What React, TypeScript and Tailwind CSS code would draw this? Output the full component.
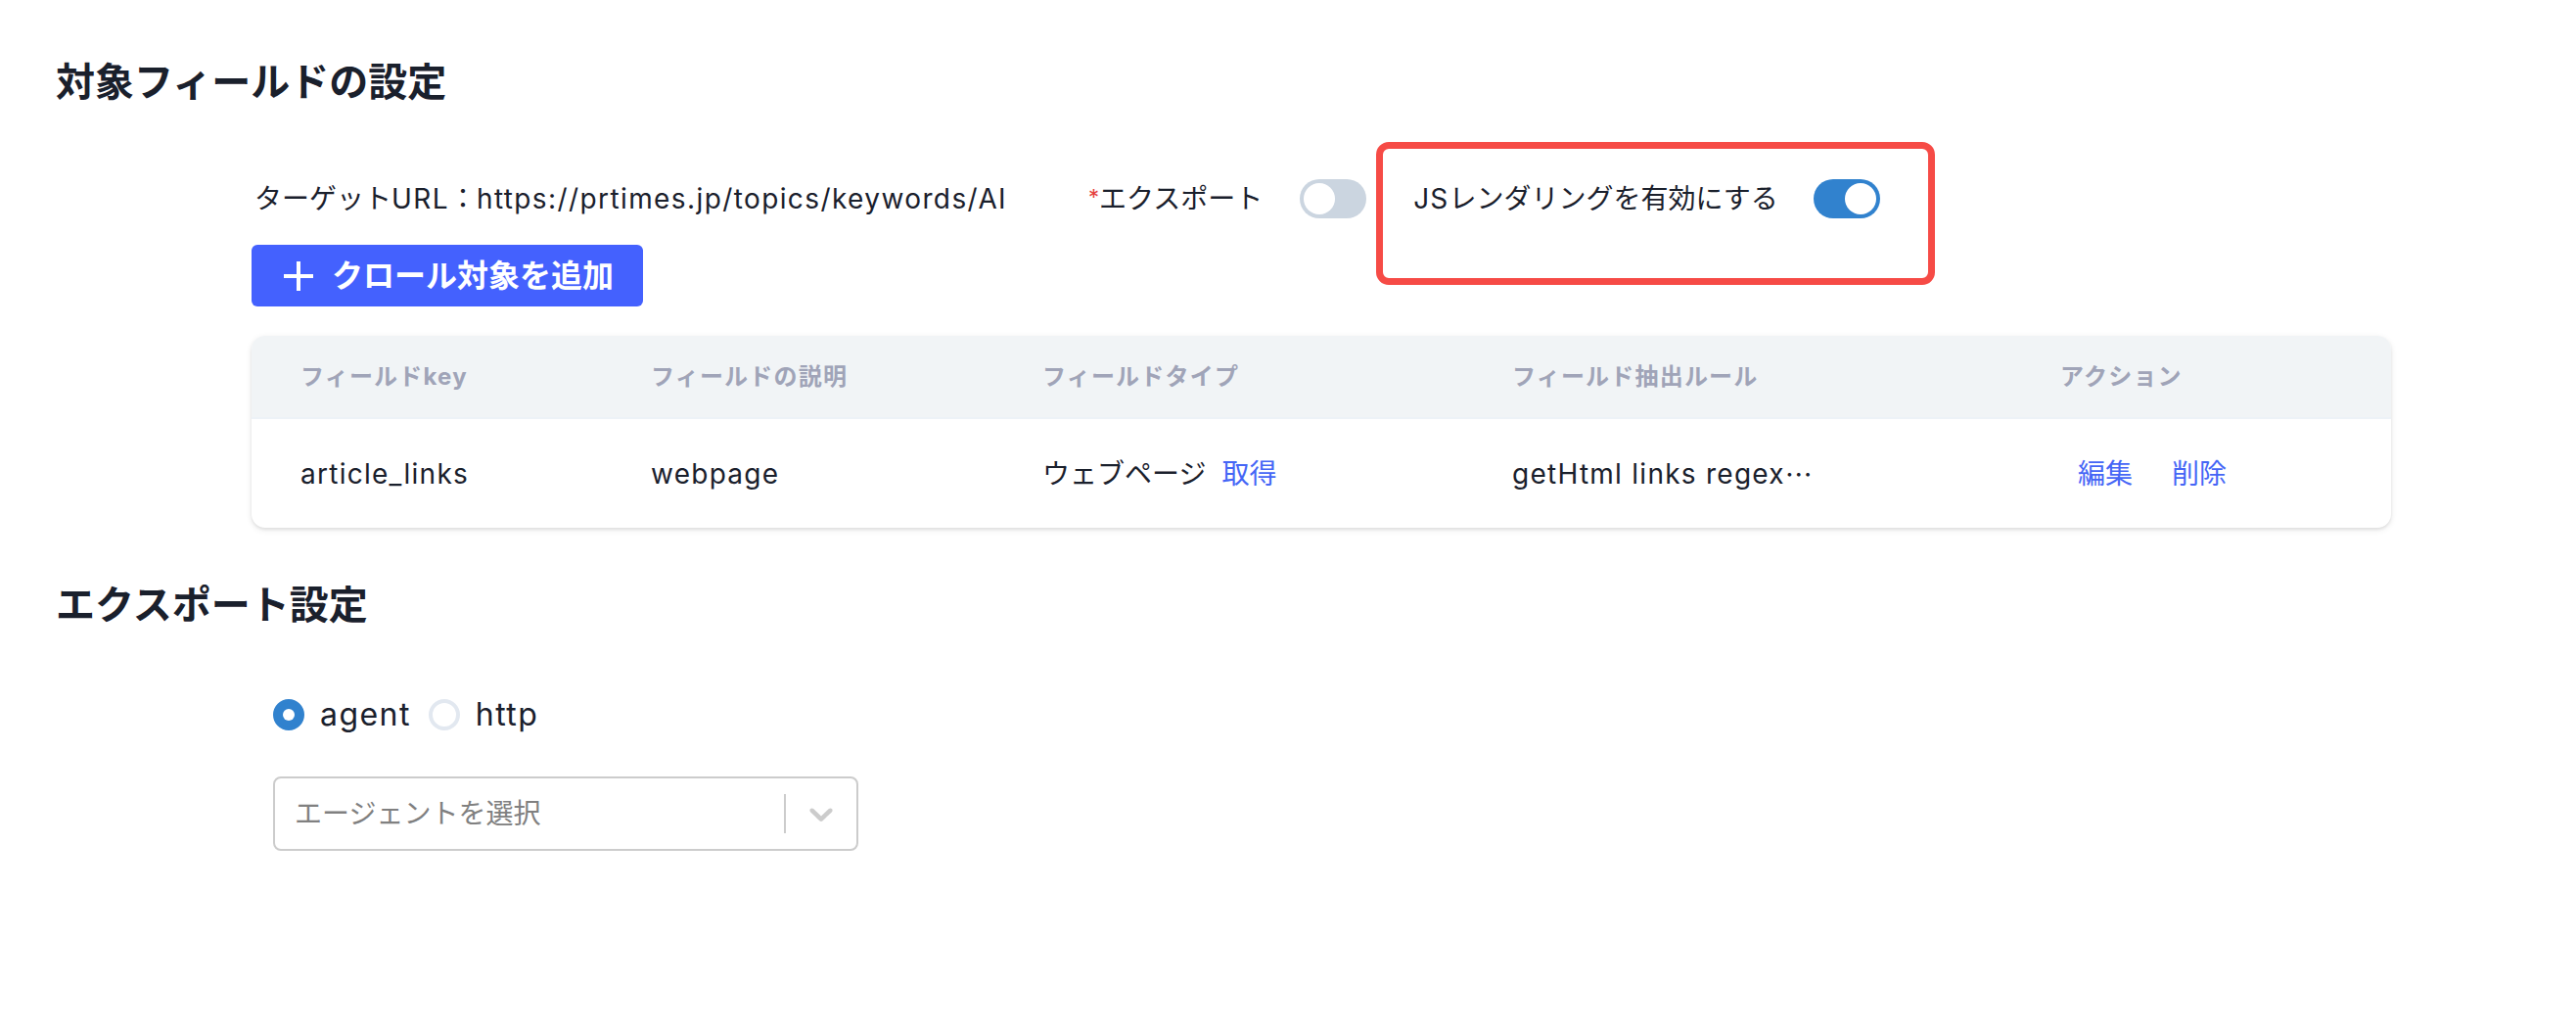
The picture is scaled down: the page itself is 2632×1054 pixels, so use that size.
import React from 'react';

const COLS = 'grid grid-cols-[358px_400px_480px_560px_1fr] items-center pl-[50px]';

const Toggle: React.FC<{ on?: boolean; className?: string }> = ({ on, className = '' }) => (
  <div
    className={`flex h-[40px] w-[68px] shrink-0 items-center rounded-full p-[4px] ${
      on ? 'justify-end bg-[#3182ce]' : 'justify-start bg-[#cbd5e0]'
    } ${className}`}
  >
    <div className="h-[32px] w-[32px] rounded-full bg-white" />
  </div>
);

const Radio: React.FC<{ checked?: boolean; label: string; className?: string }> = ({ checked, label, className = '' }) => (
  <label className={`flex items-center ${className}`}>
    {checked ? (
      <span className="flex h-[32px] w-[32px] items-center justify-center rounded-full border-[4px] border-[#3182ce] bg-[#3182ce]">
        <span className="h-[12px] w-[12px] rounded-full bg-white" />
      </span>
    ) : (
      <span className="h-[32px] w-[32px] rounded-full border-[4px] border-[#e2e8f0] bg-white" />
    )}
    <span className="ml-[16px] tracking-[0.045em]">{label}</span>
  </label>
);

const App: React.FC = () => {
  return (
    <div className="min-h-screen w-full bg-white pl-[57px] pt-[56px] font-['Inter','Noto_Sans_CJK_JP',sans-serif] text-[#1a202c]">
      {/* Target fields */}
      <h2 className="text-[40px] font-bold leading-[56px]">対象フィールドの設定</h2>

      <div className="ml-[200px] w-[2186px]">
        <div className="mt-[71px] flex h-[40px] items-center text-[28px]">
          <span className="w-[774px] shrink-0 whitespace-nowrap pl-[3px]">
            ターゲット<span className="tracking-[0.05em]">URL</span>：
            <span className="tracking-[0.05em]">https://prtimes.jp/topics/keywords/AI</span>
          </span>

          <div className="ml-[81px] flex items-center">
            <span>
              <span className="relative top-[-4px] text-[22px] text-[#e53e3e]">*</span>エクスポート
            </span>
            <Toggle className="ml-[38px]" />
          </div>

          <div className="relative ml-[48px] flex items-center">
            <span>
              <span className="tracking-[0.04em]">JS</span>レンダリングを有効にする
            </span>
            <Toggle on className="ml-[36px]" />
            {/* highlight annotation */}
            <div className="pointer-events-none absolute left-[-38px] top-[-37px] h-[146px] w-[571px] rounded-[13px] border-[7px] border-[#f64b46]" />
          </div>
        </div>

        <button className="mt-[27px] flex h-[63px] items-center gap-[18px] rounded-[6px] bg-[#4461fe] pl-[32px] pr-[30px] text-[32px] font-semibold text-white">
          <svg width="32" height="32" viewBox="0 0 32 32" fill="none" stroke="currentColor" strokeWidth="4">
            <path d="M16 1v30M1 16h30" />
          </svg>
          クロール対象を追加
        </button>

        {/* Fields table */}
        <div className="mt-[30px] overflow-hidden rounded-[14px] bg-white shadow-[0_2px_6px_rgba(0,0,0,0.1),0_2px_3px_rgba(0,0,0,0.06)]">
          <div className={`${COLS} h-[83px] bg-[#f1f4f6] text-[24px] font-bold tracking-[0.05em] text-[#a0a4b8]`}>
            <span>フィールドkey</span>
            <span>フィールドの説明</span>
            <span>フィールドタイプ</span>
            <span>フィールド抽出ルール</span>
            <span>アクション</span>
          </div>
          <div className={`${COLS} h-[113px] border-t-2 border-[#edf2f7] text-[28px]`}>
            <span className="tracking-[0.045em]">article_links</span>
            <span className="tracking-[0.045em]">webpage</span>
            <span className="flex items-center gap-[16px]">
              ウェブページ
              <span className="text-[#4566f6]">取得</span>
            </span>
            <span className="flex items-center">
              <span className="tracking-[0.045em]">getHtml links regex</span>
              <span className="font-['Noto_Sans_CJK_JP',sans-serif]">⋯</span>
            </span>
            <span className="flex items-center gap-[40px] pl-[18px] text-[#4566f6]">
              <span>編集</span>
              <span>削除</span>
            </span>
          </div>
        </div>
      </div>

      {/* Export settings */}
      <h2 className="mt-[51px] text-[40px] font-bold leading-[56px]">エクスポート設定</h2>

      <div className="ml-[222px]">
        <div className="mt-[60px] flex h-[48px] items-center text-[32px]">
          <Radio checked label="agent" />
          <Radio label="http" className="ml-[18px]" />
        </div>

        <div className="mt-[39px] flex h-[76px] w-[598px] items-center rounded-[8px] border-2 border-[#cccccc] bg-white">
          <div className="flex-1 pl-[20px] text-[28px] text-[#808080]">エージェントを選択</div>
          <div className="h-[40px] w-[2px] bg-[#cccccc]" />
          <div className="flex h-full w-[72px] items-center justify-center">
            <svg width="40" height="40" viewBox="0 0 20 20" fill="#cccccc">
              <path d="M4.516 7.548c0.436-0.446 1.043-0.481 1.576 0l3.908 3.747 3.908-3.747c0.533-0.481 1.141-0.446 1.574 0 0.436 0.445 0.408 1.197 0 1.615-0.406 0.418-4.695 4.502-4.695 4.502-0.217 0.223-0.502 0.335-0.787 0.335s-0.57-0.112-0.789-0.335c0 0-4.287-4.084-4.695-4.502s-0.436-1.17 0-1.615z" />
            </svg>
          </div>
        </div>
      </div>
    </div>
  );
};

export default App;
